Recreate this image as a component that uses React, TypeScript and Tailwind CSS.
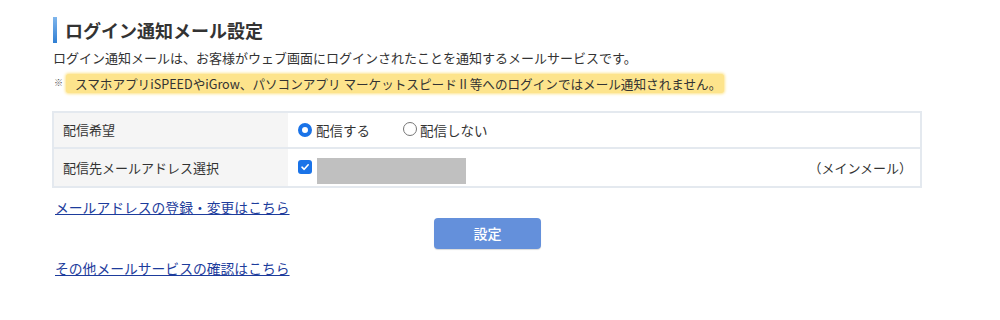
import React from "react";

const font = { fontFamily: '"Noto Sans CJK JP", "Noto Sans", sans-serif' };

function RadioOn() {
  return (
    <span className="inline-block w-[14px] h-[14px] rounded-full border-[4px] border-[#1a73e8] bg-white box-border" />
  );
}
function RadioOff() {
  return (
    <span className="inline-block w-[14px] h-[14px] rounded-full border border-[#767676] bg-white box-border" />
  );
}
function CheckOn() {
  return (
    <span className="inline-flex items-center justify-center w-[14px] h-[14px] rounded-[3px] bg-[#1a73e8]">
      <svg width="10" height="10" viewBox="0 0 10 10">
        <path d="M2 5.2 L4.2 7.3 L8.2 2.8" fill="none" stroke="white" strokeWidth="1.6" strokeLinecap="round" strokeLinejoin="round" />
      </svg>
    </span>
  );
}

export default function App() {
  return (
    <div className="w-[1000px] h-[320px] bg-white text-[#333]" style={font}>
      <div className="ml-[53px] w-[869px] pt-[17px]">
        <div className="flex items-center h-[26px]">
          <div className="w-[4px] h-[26px] bg-gradient-to-b from-[#7fb6ec] to-[#2f7fd3]" />
          <h1 className="ml-[8px] text-[18px] font-bold leading-[26px] text-[#333]">ログイン通知メール設定</h1>
        </div>
        <p className="mt-[6px] text-[13px] leading-[18px] text-[#333]">
          ログイン通知メールは、お客様がウェブ画面にログインされたことを通知するメールサービスです。
        </p>
        <div className="mt-[6px] flex items-center h-[20px]">
          <span className="text-[9px] text-[#555] ml-[1px]">※</span>
          <span className="ml-[3px] pl-[9px] pr-[3px] h-[19px] leading-[19px] text-[12.6px] bg-[#fde48c] rounded-[3px] shadow-[0_0_3px_1px_#fde48c]">
            スマホアプリiSPEEDやiGrow、パソコンアプリ マーケットスピード II 等へのログインではメール通知されません。
          </span>
        </div>
        <div className="mt-[18px] -ml-[1px] border-2 border-[#e4e9ef] text-[13px]">
          <div className="flex h-[36px] border-b-2 border-[#e4e9ef]">
            <div className="w-[234px] bg-[#f5f5f5] flex items-center pl-[9px]">配信希望</div>
            <div className="flex-1 flex items-center pl-[10px] text-[13.5px]">
              <RadioOn />
              <span className="ml-[4px]">配信する</span>
              <span className="ml-[33px]"><RadioOff /></span>
              <span className="ml-[3px]">配信しない</span>
            </div>
          </div>
          <div className="flex h-[37px]">
            <div className="w-[234px] bg-[#f5f5f5] flex items-center pl-[9px]">配信先メールアドレス選択</div>
            <div className="flex-1 flex items-center pl-[10px] pr-[8px]">
              <span className="-mt-[2px]"><CheckOn /></span>
              <span className="ml-[5px] w-[149px] h-[26px] mt-[6px] bg-[#c0c0c0]" />
              <span className="ml-auto">（メインメール）</span>
            </div>
          </div>
        </div>
        <div className="flex flex-col mt-[10px]">
          <a href="#" className="self-start ml-[2px] text-[13.8px] leading-[18px] text-[#1d3c9c] underline">
            メールアドレスの登録・変更はこちら
          </a>
          <button className="self-center mt-[2px] w-[107px] h-[31px] rounded-[4px] bg-[#6490db] text-white text-[14px] font-medium shadow-[0_1px_1px_rgba(0,0,0,0.15)]">
            設定
          </button>
          <a href="#" className="self-start ml-[2px] mt-[10px] text-[13.8px] leading-[18px] text-[#1d3c9c] underline">
            その他メールサービスの確認はこちら
          </a>
        </div>
      </div>
    </div>
  );
}
